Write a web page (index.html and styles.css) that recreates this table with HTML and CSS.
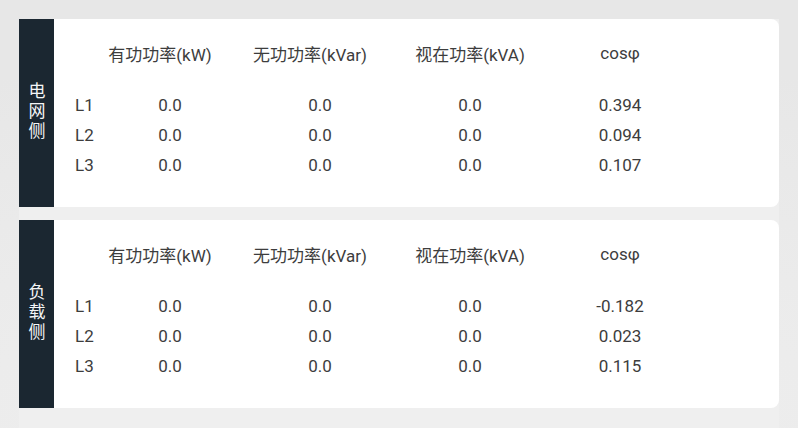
FILE: index.html
```html
<!DOCTYPE html>
<html lang="zh-CN">
<head>
<meta charset="utf-8">
<title>功率</title>
<link rel="stylesheet" href="styles.css">
</head>
<body>
<div class="wrap">
  <section class="card">
    <div class="side"><span class="side-text">电网侧</span></div>
    <div class="table">
      <div class="row head">
        <div></div>
        <div class="shift">有功功率(kW)</div>
        <div class="shift">无功功率(kVar)</div>
        <div>视在功率(kVA)</div>
        <div>cosφ</div>
      </div>
      <div class="row"><div class="lbl">L1</div><div>0.0</div><div>0.0</div><div>0.0</div><div>0.394</div></div>
      <div class="row"><div class="lbl">L2</div><div>0.0</div><div>0.0</div><div>0.0</div><div>0.094</div></div>
      <div class="row"><div class="lbl">L3</div><div>0.0</div><div>0.0</div><div>0.0</div><div>0.107</div></div>
    </div>
  </section>
  <section class="card">
    <div class="side"><span class="side-text">负载侧</span></div>
    <div class="table">
      <div class="row head">
        <div></div>
        <div class="shift">有功功率(kW)</div>
        <div class="shift">无功功率(kVar)</div>
        <div>视在功率(kVA)</div>
        <div>cosφ</div>
      </div>
      <div class="row"><div class="lbl">L1</div><div>0.0</div><div>0.0</div><div>0.0</div><div>-0.182</div></div>
      <div class="row"><div class="lbl">L2</div><div>0.0</div><div>0.0</div><div>0.0</div><div>0.023</div></div>
      <div class="row"><div class="lbl">L3</div><div>0.0</div><div>0.0</div><div>0.0</div><div>0.115</div></div>
    </div>
  </section>
</div>
</body>
</html>
```
FILE: styles.css
```css
html, body {
  margin: 0;
  height: 100%;
}
body {
  background: radial-gradient(ellipse 120% 90% at 50% 100%, #f0f0f0 0%, #e7e7e7 100%);
  font-family: Roboto, "Noto Sans CJK SC", sans-serif;
  color: #3d3d3d;
  overflow: hidden;
}
.wrap {
  margin: 19px 19px 0 19px;
  width: 760px;
  height: 409px;
  background: #efefef;
  display: flex;
  flex-direction: column;
  gap: 13px;
}
.card {
  height: 188px;
  background: #fff;
  border-radius: 0 8px 8px 0;
  display: flex;
}
.side {
  width: 35px;
  flex: none;
  background: #1b2731;
  color: #f4f5f6;
  display: flex;
  align-items: center;
  justify-content: center;
}
.side-text {
  writing-mode: vertical-rl;
  font-family: "Noto Sans CJK SC", sans-serif;
  font-size: 17px;
  letter-spacing: 3px;
  line-height: 20px;
  margin-top: -2px;
}
.table {
  padding: 19px 0 0 21px;
}
.row {
  display: grid;
  grid-template-columns: 20px 150px 150px 150px 150px;
  height: 30px;
  align-items: center;
  font-size: 17px;
  text-align: center;
}
.row.head {
  margin-bottom: 22px;
}
.shift {
  padding-right: 20px;
}
.lbl {
  text-align: left;
}
```
